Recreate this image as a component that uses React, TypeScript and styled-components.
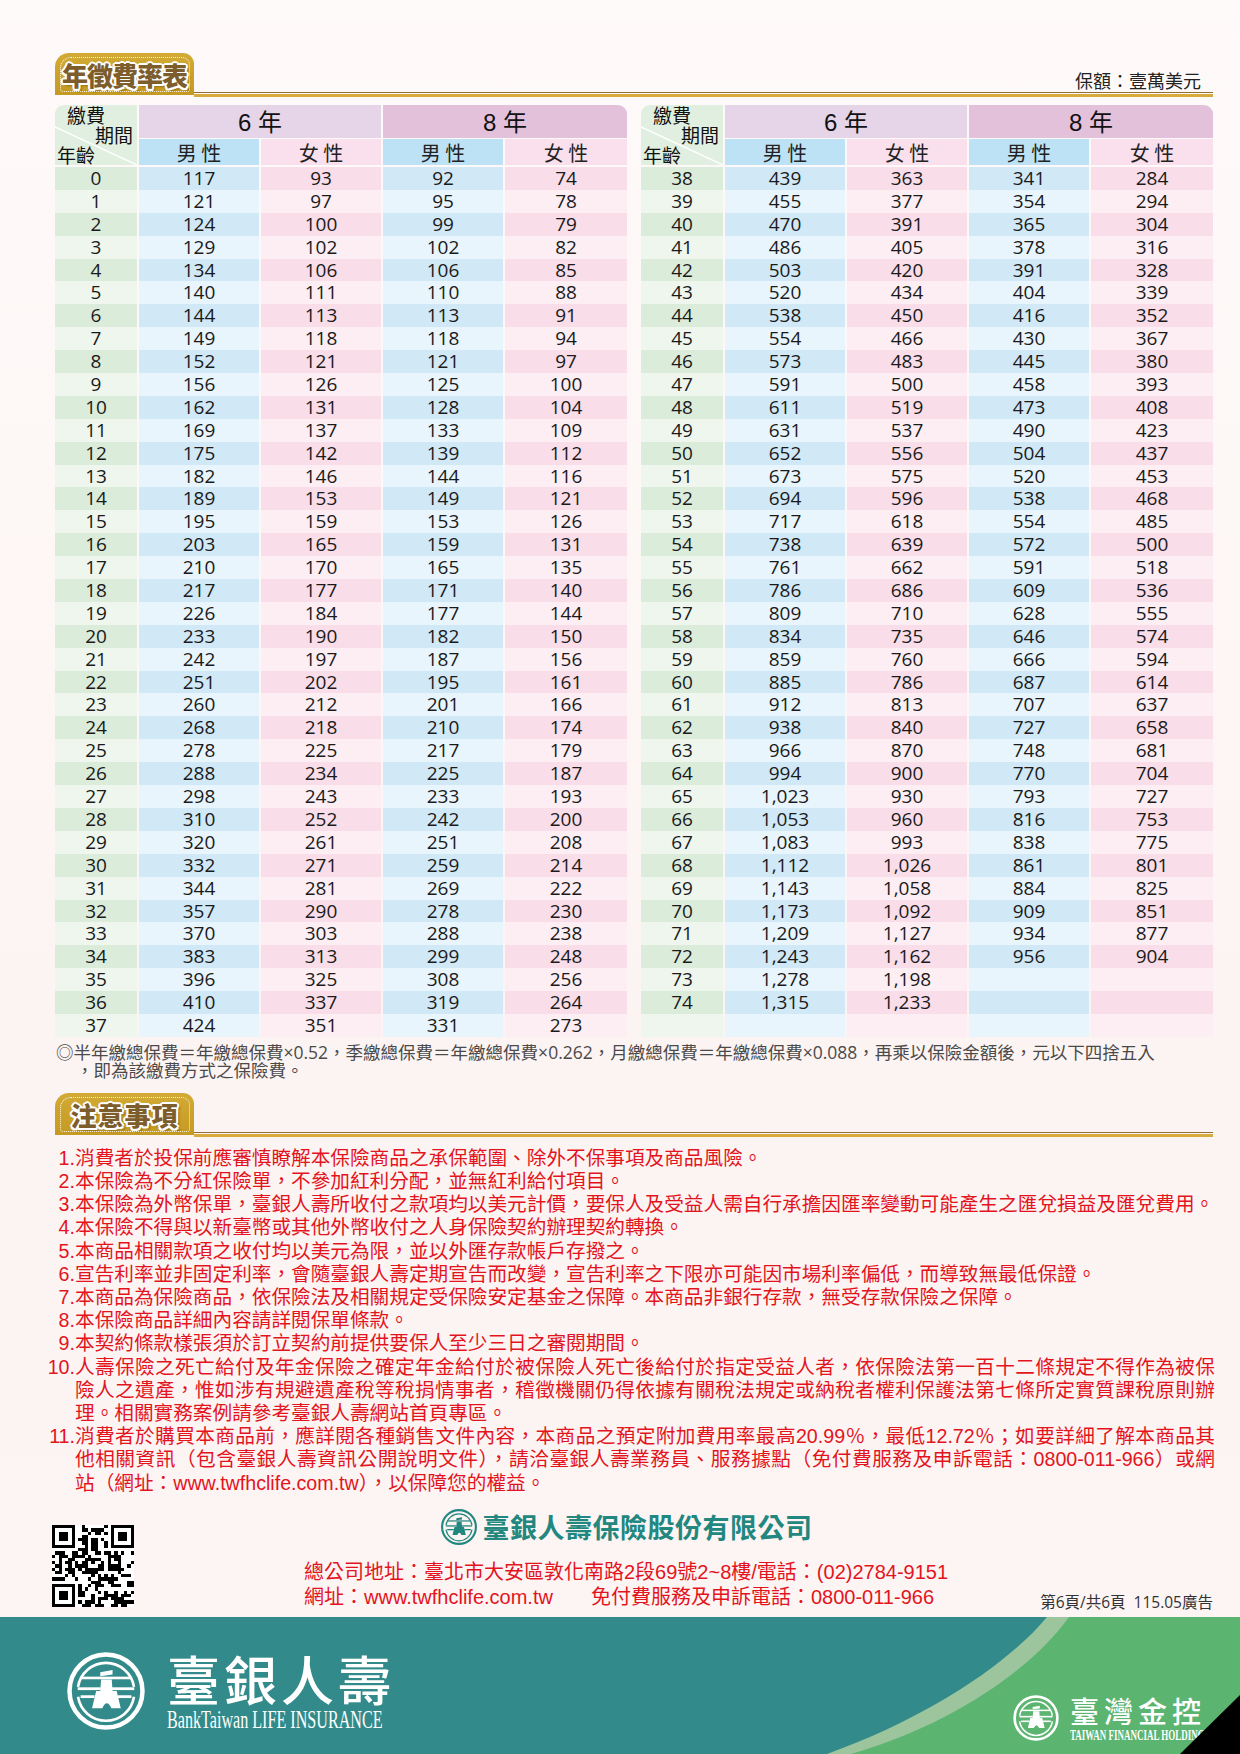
import React from "react";
import styled, { createGlobalStyle } from "styled-components";

const CJK = `"Noto Sans CJK TC", "Noto Sans CJK JP", sans-serif`;
const SANS = `"Liberation Sans", ${CJK}`;
const NUM = `"Open Sans", ${CJK}`;
const SERIF = `"Liberation Serif", serif`;

const GlobalStyle = createGlobalStyle`
  html, body { margin: 0; padding: 0; }
  body { width: 1240px; background: #fdf7f6; }
`;

// age, 6年男, 6年女, 8年男, 8年女
const LEFT = `0 117 93 92 74
1 121 97 95 78
2 124 100 99 79
3 129 102 102 82
4 134 106 106 85
5 140 111 110 88
6 144 113 113 91
7 149 118 118 94
8 152 121 121 97
9 156 126 125 100
10 162 131 128 104
11 169 137 133 109
12 175 142 139 112
13 182 146 144 116
14 189 153 149 121
15 195 159 153 126
16 203 165 159 131
17 210 170 165 135
18 217 177 171 140
19 226 184 177 144
20 233 190 182 150
21 242 197 187 156
22 251 202 195 161
23 260 212 201 166
24 268 218 210 174
25 278 225 217 179
26 288 234 225 187
27 298 243 233 193
28 310 252 242 200
29 320 261 251 208
30 332 271 259 214
31 344 281 269 222
32 357 290 278 230
33 370 303 288 238
34 383 313 299 248
35 396 325 308 256
36 410 337 319 264
37 424 351 331 273`;

const RIGHT = `38 439 363 341 284
39 455 377 354 294
40 470 391 365 304
41 486 405 378 316
42 503 420 391 328
43 520 434 404 339
44 538 450 416 352
45 554 466 430 367
46 573 483 445 380
47 591 500 458 393
48 611 519 473 408
49 631 537 490 423
50 652 556 504 437
51 673 575 520 453
52 694 596 538 468
53 717 618 554 485
54 738 639 572 500
55 761 662 591 518
56 786 686 609 536
57 809 710 628 555
58 834 735 646 574
59 859 760 666 594
60 885 786 687 614
61 912 813 707 637
62 938 840 727 658
63 966 870 748 681
64 994 900 770 704
65 1023 930 793 727
66 1053 960 816 753
67 1083 993 838 775
68 1112 1026 861 801
69 1143 1058 884 825
70 1173 1092 909 851
71 1209 1127 934 877
72 1243 1162 956 904
73 1278 1198
74 1315 1233
`;

const parse = (src: string) =>
  src.split("\n").map((line) => {
    const vals = line.trim() ? line.trim().split(" ").map(Number) : [];
    return [0, 1, 2, 3, 4].map((i) => (vals[i] === undefined ? null : vals[i]));
  });

const fmt = (n: number | null) => (n === null ? "" : n.toLocaleString("en-US"));

const NOTICES: { n: string; lines: string[] }[] = [
  { n: "1.", lines: ["消費者於投保前應審慎瞭解本保險商品之承保範圍、除外不保事項及商品風險。"] },
  { n: "2.", lines: ["本保險為不分紅保險單，不參加紅利分配，並無紅利給付項目。"] },
  { n: "3.", lines: ["本保險為外幣保單，臺銀人壽所收付之款項均以美元計價，要保人及受益人需自行承擔因匯率變動可能產生之匯兌損益及匯兌費用。"] },
  { n: "4.", lines: ["本保險不得與以新臺幣或其他外幣收付之人身保險契約辦理契約轉換。"] },
  { n: "5.", lines: ["本商品相關款項之收付均以美元為限，並以外匯存款帳戶存撥之。"] },
  { n: "6.", lines: ["宣告利率並非固定利率，會隨臺銀人壽定期宣告而改變，宣告利率之下限亦可能因市場利率偏低，而導致無最低保證。"] },
  { n: "7.", lines: ["本商品為保險商品，依保險法及相關規定受保險安定基金之保障。本商品非銀行存款，無受存款保險之保障。"] },
  { n: "8.", lines: ["本保險商品詳細內容請詳閱保單條款。"] },
  { n: "9.", lines: ["本契約條款樣張須於訂立契約前提供要保人至少三日之審閱期間。"] },
  {
    n: "10.",
    lines: [
      "人壽保險之死亡給付及年金保險之確定年金給付於被保險人死亡後給付於指定受益人者，依保險法第一百十二條規定不得作為被保",
      "險人之遺產，惟如涉有規避遺產稅等稅捐情事者，稽徵機關仍得依據有關稅法規定或納稅者權利保護法第七條所定實質課稅原則辦",
      "理。相關實務案例請參考臺銀人壽網站首頁專區。",
    ],
  },
  {
    n: "11.",
    lines: [
      "消費者於購買本商品前，應詳閱各種銷售文件內容，本商品之預定附加費用率最高20.99％，最低12.72％；如要詳細了解本商品其",
      "他相關資訊（包含臺銀人壽資訊公開說明文件），請洽臺銀人壽業務員、服務據點（免付費服務及申訴電話：0800-011-966）或網",
      "站（網址：www.twfhclife.com.tw），以保障您的權益。",
    ],
  },
];

// deterministic QR-like matrix
const qrCells = (() => {
  const size = 25;
  let seed = 7;
  const rnd = () => {
    seed = (seed * 1103515245 + 12345) % 2147483648;
    return seed / 2147483648;
  };
  const cells: [number, number][] = [];
  const inFinder = (x: number, y: number) =>
    (x < 8 && y < 8) || (x > 16 && y < 8) || (x < 8 && y > 16);
  for (let y = 0; y < size; y++)
    for (let x = 0; x < size; x++) {
      if (inFinder(x, y)) continue;
      if (rnd() < 0.5) cells.push([x, y]);
    }
  return cells;
})();

const Finder = ({ x, y }: { x: number; y: number }) => (
  <g>
    <rect x={x} y={y} width={7} height={7} fill="#000" />
    <rect x={x + 1} y={y + 1} width={5} height={5} fill="#fff" />
    <rect x={x + 2} y={y + 2} width={3} height={3} fill="#000" />
  </g>
);

const QrCode = () => (
  <QrSvg viewBox="0 0 25 25" shapeRendering="crispEdges">
    <rect width={25} height={25} fill="#fff" />
    {qrCells.map(([x, y]) => (
      <rect key={`${x}-${y}`} x={x} y={y} width={1} height={1} fill="#000" />
    ))}
    <Finder x={0} y={0} />
    <Finder x={18} y={0} />
    <Finder x={0} y={18} />
  </QrSvg>
);

// Bank of Taiwan mark: double ring, spade coin in the middle, bars to the ring
const BankLogo = ({ color, size }: { color: string; size: number }) => (
  <svg width={size} height={size} viewBox="0 0 100 100">
    <circle cx={50} cy={50} r={44.5} fill="none" stroke={color} strokeWidth={5.5} />
    <path d="M15.9 45 A34.5 34.5 0 0 1 84.1 45" fill="none" stroke={color} strokeWidth={3.2} />
    <path d="M84.1 57 A34.5 34.5 0 0 1 15.9 57" fill="none" stroke={color} strokeWidth={3.2} />
    <rect x={20} y={32.5} width={60} height={3.2} fill={color} />
    <rect x={15.5} y={45.5} width={28} height={3.4} fill={color} />
    <rect x={56.5} y={45.5} width={28} height={3.4} fill={color} />
    <rect x={19} y={55.2} width={17} height={3.4} fill={color} />
    <rect x={64} y={55.2} width={17} height={3.4} fill={color} />
    <path d="M43 27 L58 24.5 L58 30 L43 32 Z" fill={color} />
    <path
      d="M44 36 H57 L58 50 H63 L68 71 H56.5 Q51 59 45.5 71 H33 L38 50 H43 Z"
      fill={color}
    />
  </svg>
);

type Rows = (number | null)[][];

const RateTable = ({ rows }: { rows: Rows }) => (
  <Table>
    <Head>
      <Corner>
        <Diagonal viewBox="0 0 82 60" preserveAspectRatio="none">
          <line x1={0} y1={22} x2={82} y2={60} stroke="#fff" strokeWidth={1.4} />
        </Diagonal>
        <CornerText $align="start" $pad="0 0 0 12px">繳費</CornerText>
        <CornerText $align="end" $pad="0 4px 0 0">期間</CornerText>
        <CornerText $align="start" $pad="0 0 0 2px">年齡</CornerText>
      </Corner>
      <YearCell $tone="#e6d5e8">6 年</YearCell>
      <YearCell $tone="#e3c1da" $last>
        8 年
      </YearCell>
      <SexCell $sex="m">男 性</SexCell>
      <SexCell $sex="f">女 性</SexCell>
      <SexCell $sex="m">男 性</SexCell>
      <SexCell $sex="f">女 性</SexCell>
    </Head>
    <Body>
      {rows.map((r, i) => (
        <React.Fragment key={i}>
          <AgeCell $dark={i % 2 === 0}>{r[0] === null ? "" : r[0]}</AgeCell>
          <DataCell $sex="m" $dark={i % 2 === 0}>{fmt(r[1])}</DataCell>
          <DataCell $sex="f" $dark={i % 2 === 0}>{fmt(r[2])}</DataCell>
          <DataCell $sex="m" $dark={i % 2 === 0}>{fmt(r[3])}</DataCell>
          <DataCell $sex="f" $dark={i % 2 === 0}>{fmt(r[4])}</DataCell>
        </React.Fragment>
      ))}
    </Body>
  </Table>
);

export default function App() {
  return (
    <>
      <GlobalStyle />
      <Page>
        <Main>
          <SectionHead>
            <Badge>年徵費率表</Badge>
            <HeadRule>
              <Caption>保額：壹萬美元</Caption>
              <DoubleLine />
            </HeadRule>
          </SectionHead>

          <Tables>
            <RateTable rows={parse(LEFT)} />
            <RateTable rows={parse(RIGHT)} />
          </Tables>

          <Note>
            <NoteLine>◎半年繳總保費＝年繳總保費×0.52，季繳總保費＝年繳總保費×0.262，月繳總保費＝年繳總保費×0.088，再乘以保險金額後，元以下四捨五入</NoteLine>
            <NoteLine $indent>，即為該繳費方式之保險費。</NoteLine>
          </Note>

          <SectionHead $top={14}>
            <Badge $spacing={1}>注意事項</Badge>
            <HeadRule>
              <DoubleLine />
            </HeadRule>
          </SectionHead>

          <NoticeList>
            {NOTICES.map((item) => (
              <NoticeItem key={item.n}>
                <NoticeNum>{item.n}</NoticeNum>
                <NoticeText>
                  {item.lines.map((line, i) => (
                    <NoticeLine key={i} $justify={i < item.lines.length - 1}>
                      {line}
                    </NoticeLine>
                  ))}
                </NoticeText>
              </NoticeItem>
            ))}
          </NoticeList>

          <FooterRow>
            <QrCode />
            <Company>
              <CompanyName>
                <BankLogo color="#22877e" size={38} />
                <span>臺銀人壽保險股份有限公司</span>
              </CompanyName>
              <Address>
                <div>總公司地址：臺北市大安區敦化南路2段69號2~8樓/電話：(02)2784-9151</div>
                <div>
                  網址：www.twfhclife.com.tw<Spacer />免付費服務及申訴電話：0800-011-966
                </div>
              </Address>
            </Company>
            <PageNo>第6頁/共6頁&nbsp;&nbsp;115.05廣告</PageNo>
          </FooterRow>
        </Main>

        <Band>
          <BandArt viewBox="0 0 1240 137" preserveAspectRatio="none">
            <path d="M1047 0 C1010 45 930 100 827 137 L1240 137 L1240 0 Z" fill="#9cc59e" />
            <path d="M1069 0 C1034 50 952 108 851 137 L1240 137 L1240 0 Z" fill="#5bb470" />
          </BandArt>
          <BrandLeft>
            <BankLogo color="#fff" size={82} />
            <BrandText>
              <BrandName>臺銀人壽</BrandName>
              <BrandSub>BankTaiwan LIFE INSURANCE</BrandSub>
            </BrandText>
          </BrandLeft>
          <BrandRight>
            <BankLogo color="#fff" size={48} />
            <BrandText>
              <HoldName>臺灣金控</HoldName>
              <HoldSub>TAIWAN FINANCIAL HOLDINGS</HoldSub>
            </BrandText>
          </BrandRight>
          <Fold />
        </Band>
      </Page>
    </>
  );
}

const Page = styled.div`
  width: 1240px;
  height: 1754px;
  display: flex;
  flex-direction: column;
  overflow: hidden;
  background: linear-gradient(180deg, #fefaf9 0%, #fcf4f3 60%, #fcf5f4 100%);
  font-family: ${CJK};
`;

const Main = styled.main`
  padding: 53px 27px 0 55px;
`;

const SectionHead = styled.div<{ $top?: number }>`
  display: flex;
  align-items: flex-end;
  margin-top: ${(p) => p.$top ?? 0}px;
`;

const Badge = styled.div<{ $spacing?: number }>`
  position: relative;
  flex: none;
  width: 139px;
  height: 42px;
  box-sizing: border-box;
  padding-top: 2px;
  display: flex;
  align-items: center;
  justify-content: center;
  background: linear-gradient(180deg, #d3aa35 0%, #c49a22 100%);
  border-radius: 14px 11px 0 0;
  font: 900 26px/1 ${CJK};
  letter-spacing: ${(p) => p.$spacing ?? -1}px;
  color: #7d5d2c;
  text-shadow: 2px 0 0 #fff, -2px 0 0 #fff, 0 2px 0 #fff, 0 -2px 0 #fff,
    1.5px 1.5px 0 #fff, -1.5px -1.5px 0 #fff, 1.5px -1.5px 0 #fff, -1.5px 1.5px 0 #fff,
    3px 3px 2px rgba(90, 60, 10, 0.45);

  &::before {
    content: "";
    position: absolute;
    inset: 4px 4px 3px 5px;
    border: 1.5px dotted rgba(255, 255, 255, 0.9);
    border-radius: 11px 8px 3px 3px;
  }
`;

const HeadRule = styled.div`
  flex: 1;
  display: flex;
  flex-direction: column;
  align-items: flex-end;
`;

const Caption = styled.div`
  font-size: 18px;
  line-height: 22px;
  color: #222;
  padding-right: 12px;
  margin-bottom: 1px;
`;

const DoubleLine = styled.div`
  align-self: stretch;
  height: 1px;
  border-top: 1.5px solid #8f6e39;
  border-bottom: 3px solid #d7ac3c;
  margin-bottom: -2px;
`;

const Tables = styled.div`
  display: flex;
  gap: 14px;
  margin-top: 10px;
`;

const Table = styled.div`
  width: 572px;
`;

const COLS = "82px 120px 120px 120px 122px";

const Head = styled.div`
  display: grid;
  grid-template-columns: ${COLS};
  grid-template-rows: 33px 26px;
  column-gap: 2px;
  row-gap: 1px;
`;

const Corner = styled.div`
  position: relative;
  grid-row: 1 / span 2;
  display: flex;
  flex-direction: column;
  justify-content: space-between;
  padding: 0 0 1px;
  background: #e1efe0;
  border-top-left-radius: 9px;
`;

const Diagonal = styled.svg`
  position: absolute;
  inset: 0;
  width: 100%;
  height: 100%;
`;

const CornerText = styled.span<{ $align: "start" | "end"; $pad: string }>`
  position: relative;
  align-self: ${(p) => (p.$align === "start" ? "flex-start" : "flex-end")};
  padding: ${(p) => p.$pad};
  font-size: 19px;
  line-height: 20px;
  color: #111;
`;

const YearCell = styled.div<{ $tone: string; $last?: boolean }>`
  grid-column: span 2;
  display: flex;
  align-items: center;
  justify-content: center;
  background: ${(p) => p.$tone};
  border-top-right-radius: ${(p) => (p.$last ? "9px" : "0")};
  font: 24px/1 ${SANS};
  color: #111;
  padding-top: 2px;
`;

const SexCell = styled.div<{ $sex: "m" | "f" }>`
  display: flex;
  align-items: center;
  justify-content: center;
  background: ${(p) => (p.$sex === "m" ? "#bde2f6" : "#f9e0ec")};
  font-size: 20px;
  color: #222;
`;

const Body = styled.div`
  display: grid;
  grid-template-columns: ${COLS};
  grid-auto-rows: 22.9px;
  column-gap: 2px;
  margin-top: 2px;
`;

const AgeCell = styled.div<{ $dark: boolean }>`
  background: ${(p) => (p.$dark ? "#dcecdb" : "#eef6ee")};
  font: 19px/22.9px ${NUM};
  color: #1a1a1a;
  text-align: center;
`;

const DataCell = styled.div<{ $sex: "m" | "f"; $dark: boolean }>`
  background: ${(p) =>
    p.$sex === "m" ? (p.$dark ? "#d1e8f7" : "#e9f5fc") : p.$dark ? "#f9dde9" : "#fdeef4"};
  font: 19px/22.9px ${NUM};
  color: #1a1a1a;
  text-align: center;
`;

const Note = styled.div`
  margin-top: 6px;
  padding-left: 1px;
  font: 17.5px/18px ${NUM};
  color: #4a4a4a;
  white-space: nowrap;
`;

const NoteLine = styled.div<{ $indent?: boolean }>`
  padding-left: ${(p) => (p.$indent ? "20px" : "0")};
`;

const NoticeList = styled.div`
  width: 1168px;
  margin: 12px 0 0 -8px;
  font: 19.65px/23.2px ${SANS};
  color: #e3141d;
`;

const NoticeItem = styled.div`
  display: grid;
  grid-template-columns: 28px 1fr;
`;

const NoticeNum = styled.span`
  text-align: right;
`;

const NoticeText = styled.div``;

const NoticeLine = styled.div<{ $justify: boolean }>`
  white-space: nowrap;
  text-align: ${(p) => (p.$justify ? "justify" : "left")};
  text-align-last: ${(p) => (p.$justify ? "justify" : "auto")};
  text-justify: inter-character;
`;

const FooterRow = styled.div`
  display: flex;
  align-items: flex-start;
  margin-top: 13px;
`;

const QrSvg = styled.svg`
  flex: none;
  width: 82px;
  height: 84px;
  margin: 16px 0 0 -3px;
`;

const Company = styled.div`
  display: flex;
  flex-direction: column;
  align-items: center;
  margin-left: 170px;
`;

const CompanyName = styled.div`
  display: flex;
  align-items: center;
  gap: 5px;
  height: 38px;
  font: 700 27px/1 ${CJK};
  color: #22877e;
  letter-spacing: 0.5px;
`;

const Address = styled.div`
  align-self: stretch;
  margin-top: 14px;
  font: 20px/25px ${SANS};
  color: #e3141d;
  white-space: nowrap;
`;

const Spacer = styled.span`
  display: inline-block;
  width: 38px;
`;

const PageNo = styled.div`
  margin: auto 0 -1px auto;
  font: 15.5px/18px ${NUM};
  color: #333;
  white-space: nowrap;
`;

const Band = styled.footer`
  position: relative;
  flex: none;
  margin-top: auto;
  height: 137px;
  display: flex;
  justify-content: space-between;
  background: #328b8a;
  overflow: hidden;
`;

const BandArt = styled.svg`
  position: absolute;
  inset: 0;
  width: 100%;
  height: 100%;
`;

const BrandLeft = styled.div`
  position: relative;
  display: flex;
  align-items: flex-start;
  gap: 20px;
  padding: 33px 0 0 65px;
`;

const BrandText = styled.div`
  display: flex;
  flex-direction: column;
  color: #fff;
`;

const BrandName = styled.div`
  font: 500 53px/56px ${CJK};
  letter-spacing: 4px;
`;

const BrandSub = styled.div`
  margin-top: 2px;
  font: 26px/24px ${SERIF};
  white-space: nowrap;
  transform: scaleX(0.62);
  transform-origin: left center;
`;

const BrandRight = styled.div`
  position: relative;
  display: flex;
  align-items: flex-start;
  gap: 10px;
  padding: 77px 30px 0 0;
`;

const HoldName = styled.div`
  font: 500 29px/32px ${CJK};
  letter-spacing: 5px;
`;

const HoldSub = styled.div`
  margin-top: 2px;
  font: 700 15px/14px ${SERIF};
  white-space: nowrap;
  transform: scaleX(0.6);
  transform-origin: left center;
  width: 140px;
`;

const Fold = styled.div`
  position: absolute;
  right: 0;
  bottom: 0;
  width: 60px;
  height: 59px;
  background: #000;
  clip-path: polygon(100% 0, 100% 100%, 0 100%);
`;
